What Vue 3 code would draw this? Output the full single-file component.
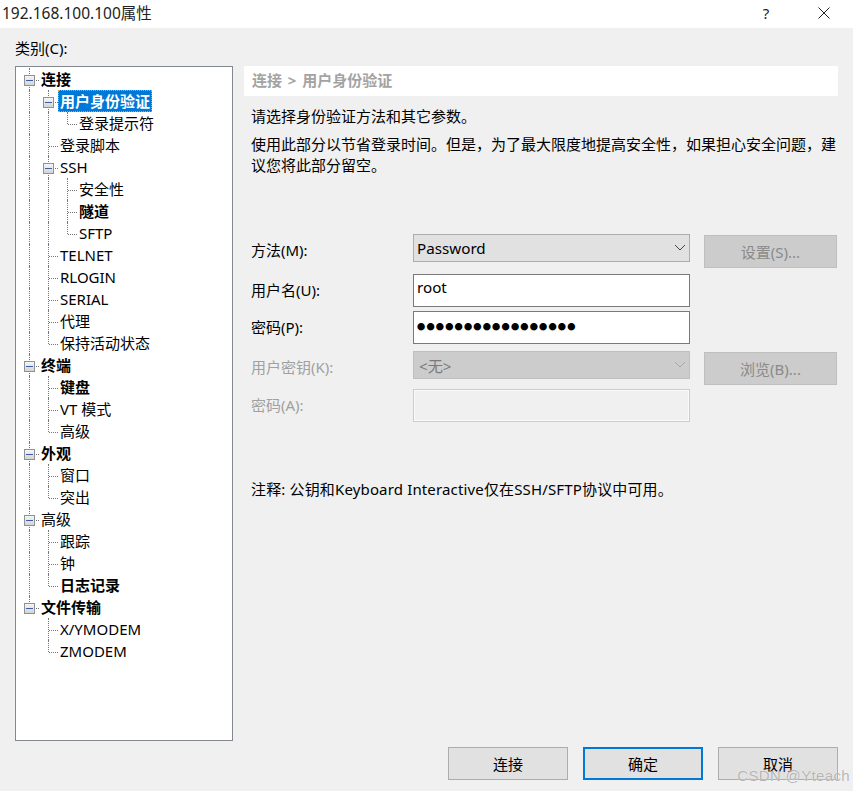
<script setup>
import { computed } from "vue";

const tree = [
  {
    label: "连接", bold: true, children: [
      { label: "用户身份验证", bold: true, selected: true, children: [{ label: "登录提示符" }] },
      { label: "登录脚本" },
      {
        label: "SSH", children: [
          { label: "安全性" },
          { label: "隧道", bold: true },
          { label: "SFTP" },
        ],
      },
      { label: "TELNET" },
      { label: "RLOGIN" },
      { label: "SERIAL" },
      { label: "代理" },
      { label: "保持活动状态" },
    ],
  },
  {
    label: "终端", bold: true, children: [
      { label: "键盘", bold: true },
      { label: "VT 模式" },
      { label: "高级" },
    ],
  },
  { label: "外观", bold: true, children: [{ label: "窗口" }, { label: "突出" }] },
  {
    label: "高级", children: [
      { label: "跟踪" },
      { label: "钟" },
      { label: "日志记录", bold: true },
    ],
  },
  { label: "文件传输", bold: true, children: [{ label: "X/YMODEM" }, { label: "ZMODEM" }] },
];

// flatten the tree, each row keeps one guide cell per depth level
const flatten = (nodes, parents = []) => {
  const rows = [];
  nodes.forEach((node, i) => {
    const last = i === nodes.length - 1;
    rows.push({
      ...node,
      guides: [...parents.map((p) => (p ? "v" : "")), last ? "l" : "t"],
      hasChildren: !!node.children,
    });
    if (node.children) rows.push(...flatten(node.children, [...parents, !last]));
  });
  return rows;
};

const rows = computed(() => flatten(tree));
</script>

<template>
  <div class="dialog">
    <header class="titlebar">
      <span class="title">192.168.100.100属性</span>
      <span class="help">?</span>
      <svg class="close" width="12" height="12" viewBox="0 0 12 12">
        <path d="M0.5 0.5L11.5 11.5M11.5 0.5L0.5 11.5" stroke="#222" stroke-width="1" fill="none" />
      </svg>
    </header>

    <div class="body">
      <aside class="left">
        <div class="category-label">类别(C):</div>
        <div class="tree">
          <div v-for="(row, i) in rows" :key="i" class="row">
            <span v-for="(g, j) in row.guides" :key="j" class="cell" :class="g">
              <span v-if="j === row.guides.length - 1 && row.hasChildren" class="expander">
                <span class="minus"></span>
              </span>
            </span>
            <span class="label" :class="{ bold: row.bold, selected: row.selected }">{{ row.label }}</span>
          </div>
        </div>
      </aside>

      <main class="right">
        <div class="crumb">连接&nbsp; &gt;&nbsp; 用户身份验证</div>
        <p class="intro">请选择身份验证方法和其它参数。</p>
        <p class="desc">使用此部分以节省登录时间。但是，为了最大限度地提高安全性，如果担心安全问题，建议您将此部分留空。</p>

        <div class="form">
          <label class="form-label row-method">方法(M):</label>
          <div class="select row-method">
            <span>Password</span>
            <svg width="12" height="7" viewBox="0 0 12 7"><path d="M1 1L6 6L11 1" stroke="#444" fill="none" /></svg>
          </div>
          <button class="btn side row-method" disabled>设置(S)...</button>

          <label class="form-label row-user">用户名(U):</label>
          <div class="input row-user">root</div>

          <label class="form-label row-pass">密码(P):</label>
          <div class="input row-pass dots">●●●●●●●●●●●●●●●●●</div>

          <label class="form-label off row-key">用户密钥(K):</label>
          <div class="select off row-key">
            <span>&lt;无&gt;</span>
            <svg width="12" height="7" viewBox="0 0 12 7"><path d="M1 1L6 6L11 1" stroke="#a8a8a8" fill="none" /></svg>
          </div>
          <button class="btn side row-key" disabled>浏览(B)...</button>

          <label class="form-label off row-phrase">密码(A):</label>
          <div class="input off row-phrase"></div>
        </div>

        <p class="note">注释: 公钥和Keyboard Interactive仅在SSH/SFTP协议中可用。</p>
      </main>
    </div>

    <footer class="footer">
      <button class="btn action">连接</button>
      <button class="btn action primary">确定</button>
      <button class="btn action">取消</button>
    </footer>

    <span class="watermark">CSDN @Yteach</span>
  </div>
</template>

<style scoped>
.dialog {
  position: relative;
  width: 853px;
  height: 791px;
  overflow: hidden;
  display: flex;
  flex-direction: column;
  background: #f0f0f0;
  color: #000;
  font-family: "Noto Sans", "Noto Sans CJK SC", sans-serif;
  font-size: 15px;
}

.titlebar {
  height: 28px;
  box-sizing: border-box;
  flex: none;
  display: flex;
  align-items: center;
  background: #fff;
  padding: 0 0 3px 2px;
}

.title {
  flex: 1;
  color: #222;
  font-size: 15.5px;
}

.help {
  width: 14px;
  margin-right: 45px;
  text-align: center;
  color: #222;
  font-size: 15px;
}

.close {
  margin-right: 23px;
}

.body {
  flex: 1;
  display: flex;
  padding-left: 15px;
}

.left {
  width: 218px;
  flex: none;
}

.category-label {
  height: 38px;
  padding-top: 9px;
  box-sizing: border-box;
  line-height: 22px;
}

.tree {
  box-sizing: border-box;
  height: 675px;
  border: 1px solid #828790;
  background: #fff;
  padding: 1px 0 0 4px;
}

.row {
  display: flex;
  height: 22px;
  align-items: center;
}

.cell {
  position: relative;
  width: 19px;
  height: 22px;
  flex: none;
}

.cell.v::before,
.cell.t::before,
.cell.l::before {
  content: "";
  position: absolute;
  left: 9px;
  top: 0;
  bottom: 0;
  border-left: 1px dotted #777;
}

.cell.l::before {
  bottom: 10px;
}

.cell.t::after,
.cell.l::after {
  content: "";
  position: absolute;
  left: 10px;
  right: 0;
  top: 12px;
  border-top: 1px dotted #777;
}

.expander {
  position: absolute;
  z-index: 1;
  left: 4px;
  top: 7px;
  box-sizing: border-box;
  width: 11px;
  height: 11px;
  border: 1px solid #919191;
  background: linear-gradient(#f6f6f6, #d4d4d4);
  display: flex;
  align-items: center;
  justify-content: center;
}

.minus {
  width: 7px;
  height: 1px;
  background: #3a5ea8;
}

.label {
  padding: 0 2px;
  line-height: 22px;
  white-space: nowrap;
}

.label.bold {
  font-weight: 700;
}

.label.selected {
  background: #0078d7;
  color: #fff;
  outline: 1px dotted #f59a23;
  outline-offset: -1px;
}

.right {
  width: 594px;
  margin-left: 11px;
  margin-top: 38px;
}

.crumb {
  height: 30px;
  line-height: 29px;
  padding-left: 8px;
  background: #fff;
  color: #a3a3a3;
  font-weight: 700;
  word-spacing: -1px;
}

.intro,
.desc,
.note {
  margin: 0;
  padding-left: 7px;
  line-height: 21px;
}

.intro {
  margin-top: 10px;
}

.desc {
  margin-top: 7px;
}

.form {
  margin-top: 58px;
  padding-left: 7px;
  display: grid;
  grid-template-columns: 162px 277px 133px;
}

.form-label {
  grid-column: 1;
  align-self: start;
  height: 30px;
  display: flex;
  align-items: center;
}

.form-label.off {
  color: #a0a0a0;
}

.row-method { grid-row: 1; }
.row-user { grid-row: 2; }
.row-pass { grid-row: 3; }
.row-key { grid-row: 4; }
.row-phrase { grid-row: 5; }

.select {
  grid-column: 2;
  box-sizing: border-box;
  height: 28px;
  margin-bottom: 12px;
  border: 1px solid #adadad;
  background: #e1e1e1;
  display: flex;
  align-items: center;
  justify-content: space-between;
  padding: 0 3px 1px;
  font-size: 15.2px;
}

.select.off {
  background: #cccccc;
  border-color: #bfbfbf;
  color: #7a7a7a;
  margin-bottom: 10px;
  padding-left: 5px;
}

.input {
  grid-column: 2;
  box-sizing: border-box;
  height: 33px;
  margin-bottom: 4px;
  border: 1px solid #7a7a7a;
  background: #fff;
  padding: 1px 3px;
  line-height: 22px;
  font-size: 15.2px;
}

.row-pass.input {
  margin-bottom: 7px;
}

.input.dots {
  font-size: 8.2px;
  letter-spacing: 1.2px;
  line-height: 27px;
}

.input.off {
  background: #f0f0f0;
  border-color: #cccccc;
  box-shadow: inset 0 0 0 1px #fafafa;
  margin-bottom: 0;
}

.btn {
  box-sizing: border-box;
  border: 1px solid #adadad;
  background: #e1e1e1;
  color: #000;
  font: inherit;
  padding: 0;
}

.btn.side {
  grid-column: 3;
  align-self: start;
  margin: 1px 0 0 14px;
  width: 133px;
  height: 33px;
  background: #cccccc;
  border-color: #bfbfbf;
  color: #8a8a8a;
}

.note {
  margin-top: 57px;
  letter-spacing: 0.15px;
}

.footer {
  height: 44px;
  flex: none;
  display: flex;
  justify-content: flex-end;
  gap: 15px;
  padding-right: 15px;
}

.btn.action {
  width: 120px;
  height: 33px;
}

.btn.primary {
  border: 2px solid #0078d7;
}

.watermark {
  position: absolute;
  right: 3px;
  bottom: 7px;
  color: rgba(150, 150, 150, 0.7);
  text-shadow: 0 0 1px #fff;
  font-size: 15px;
  letter-spacing: 0.35px;
  font-family: "Liberation Sans", sans-serif;
}
</style>
